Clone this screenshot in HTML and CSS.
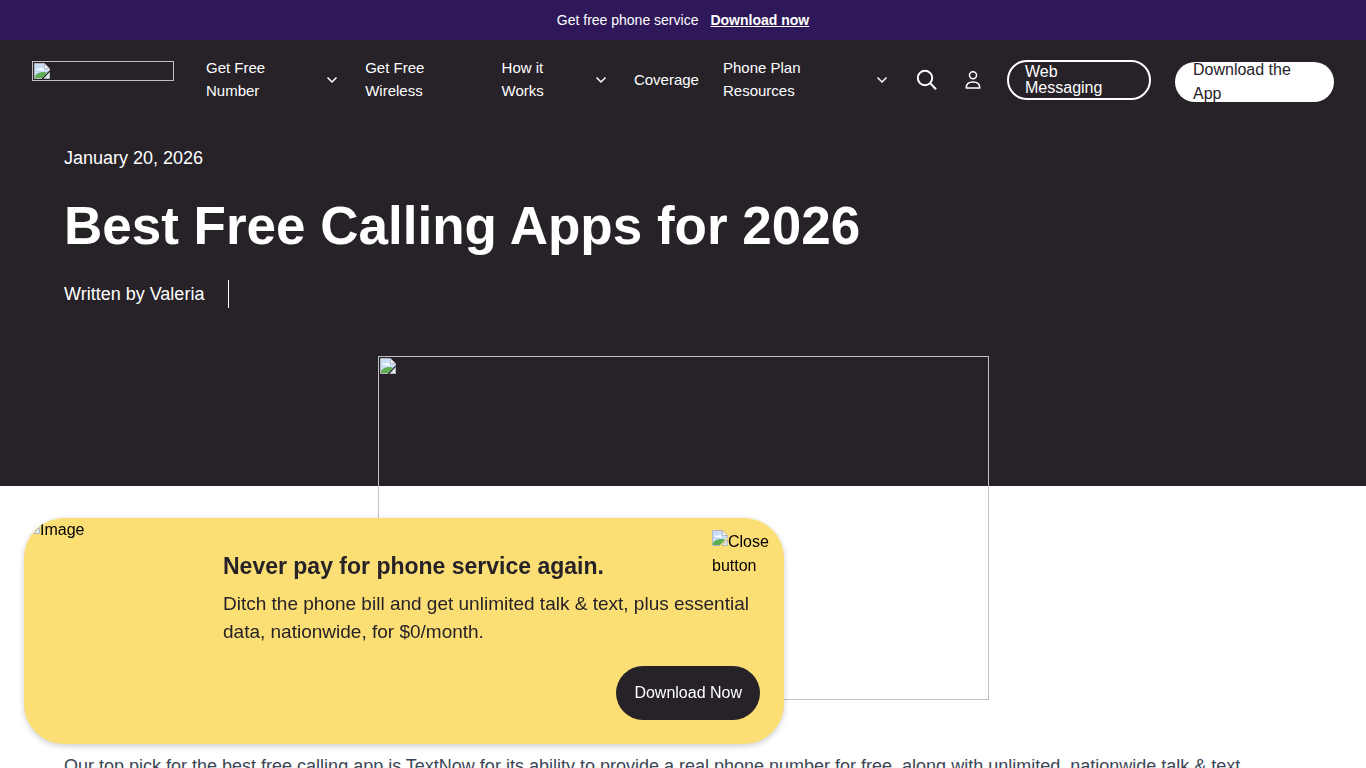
FILE: index.html
```html
<!DOCTYPE html>
<html lang="en">
<head>
    <meta charset="UTF-8">
    <meta name="viewport" content="width=device-width, initial-scale=1.0">
    <title>Best Free Calling Apps for 2026</title>
    <link rel="stylesheet" href="styles.css">
</head>
<body>
<svg class="sprite" aria-hidden="true">
    <symbol id="broken" viewBox="0 0 16 16">
        <path d="M1 1h10v5h4v2l-7 7H1z" fill="#c9dcf8"/>
        <path d="M2.500 7c0-2 2-2.500 3-1C7 4 10 5 10 7.500z" fill="#fff"/>
        <path d="M1 15v-2c2-3 5-4 8-4 2 0 3 .3 4 1l-5 5z" fill="#5fae52"/>
        <path d="M10.500 1v4.500H15z" fill="#fff"/>
        <path d="M.5 15.500V.5h10l5 5V8M10.500.5v5h5M.5 15.500H8" fill="none" stroke="#b4b8be"/>
        <path d="M15.500 9.500v6H10z" fill="#e4ebf3" stroke="#b4b8be"/>
    </symbol>
    <symbol id="chevron" viewBox="0 0 20 20">
        <path d="M6.500 8.500l4.500 4.500 4.500-4.500" fill="none" stroke="currentColor" stroke-width="1.500"/>
    </symbol>
</svg>

<div class="promo-bar">
    <span>Get free phone service</span>
    <a href="#">Download now</a>
</div>

<header class="site-header">
    <a href="#" class="logo" aria-label="Home"><svg class="broken-icon"><use href="#broken"/></svg></a>
    <nav class="main-nav">
        <a href="#">Get Free<br>Number <svg class="chevron"><use href="#chevron"/></svg></a>
        <a href="#">Get Free<br>Wireless</a>
        <a href="#">How it<br>Works <svg class="chevron"><use href="#chevron"/></svg></a>
        <a href="#">Coverage</a>
        <a href="#">Phone Plan<br>Resources <svg class="chevron"><use href="#chevron"/></svg></a>
    </nav>
    <div class="header-tools">
        <button class="icon-button" aria-label="Search">
            <svg width="22" height="22" viewBox="0 0 22 22" fill="none" stroke="currentColor" stroke-width="2">
                <circle cx="10" cy="9" r="7.200"/>
                <path d="M15 14l6 6.300"/>
            </svg>
        </button>
        <a href="#" class="icon-button" aria-label="Account">
            <svg width="22" height="22" viewBox="0 0 22 22" fill="none" stroke="currentColor" stroke-width="1.500">
                <circle cx="12" cy="6.300" r="3.500"/>
                <path d="M5.200 19c0-3.500 2.500-6 6.800-6s6.800 2.500 6.800 6z" stroke-linejoin="round"/>
            </svg>
        </a>
    </div>
    <div class="header-actions">
        <a href="#" class="pill pill-outline">Web Messaging</a>
        <a href="#" class="pill pill-solid">Download the App</a>
    </div>
</header>

<main>
    <section class="hero">
        <p class="hero-date">January 20, 2026</p>
        <h1>Best Free Calling Apps for 2026</h1>
        <p class="hero-author"><span>Written by Valeria</span></p>
    </section>
    <div class="cover"><svg class="broken-icon"><use href="#broken"/></svg></div>
    <article class="post">
        <p>Our top pick for the best free calling app is TextNow for its ability to provide a real phone number for free, along with unlimited, nationwide talk &amp; text.</p>
    </article>
</main>

<aside class="popup">
    <div class="popup-image"><svg class="broken-icon"><use href="#broken"/></svg>Image</div>
    <div class="popup-body">
        <h2>Never pay for phone service again.</h2>
        <p>Ditch the phone bill and get unlimited talk &amp; text, plus essential data, nationwide, for $0/month.</p>
        <a href="#" class="popup-cta">Download Now</a>
    </div>
    <button class="popup-close"><svg class="broken-icon"><use href="#broken"/></svg>Close button</button>
</aside>
</body>
</html>
```

FILE: styles.css
```css
* {
    margin: 0;
    padding: 0;
    box-sizing: border-box;
}

html {
    scrollbar-width: none;
}

body {
    font-family: "Liberation Sans", Arial, sans-serif;
    font-size: 16px;
    line-height: 24px;
    color: #000;
    background: #fff;
}

a {
    color: inherit;
    text-decoration: none;
}

button {
    font: inherit;
    color: inherit;
    background: none;
    border: none;
    cursor: pointer;
}

.sprite {
    display: none;
}

.broken-icon {
    width: 16px;
    height: 16px;
    vertical-align: 1px;
}

/* promo bar */
.promo-bar {
    display: flex;
    justify-content: center;
    align-items: center;
    gap: 12px;
    height: 40px;
    font-size: 14px;
    color: #fff;
    background: #2e1859;
}

.promo-bar a {
    font-weight: 700;
    text-decoration: underline;
}

/* header */
.site-header {
    display: flex;
    align-items: center;
    height: 80px;
    padding: 0 32px;
    color: #fff;
    background: #262228;
}

.logo {
    flex: none;
    display: flex;
    width: 142px;
    height: 20px;
    padding: 1px;
    margin: 0 32px 18px 0;
    border: 1px solid #c0c0c0;
}

.main-nav {
    flex: 1;
    display: grid;
    grid-template-columns: 136fr 113fr 109fr 64fr 169fr;
    align-items: center;
    gap: 24px;
    margin-bottom: 2px;
    font-size: 15px;
    line-height: 23px;
}

.main-nav a {
    position: relative;
}

.chevron {
    position: absolute;
    top: calc(50% - 10px);
    right: 0;
    width: 20px;
    height: 20px;
}

.header-tools {
    display: flex;
    gap: 24px;
    margin: 0 24px;
}

.icon-button {
    display: flex;
}

.header-actions {
    display: flex;
    align-items: center;
    gap: 24px;
}

.pill {
    display: flex;
    align-items: center;
    height: 40px;
    border-radius: 20px;
}

.pill-outline {
    width: 144px;
    padding: 0 32px 0 16px;
    line-height: 16px;
    border: 2px solid #fff;
}

.pill-solid {
    width: 159px;
    padding: 0 18px;
    margin-top: 4px;
    color: #262228;
    background: #fff;
}

/* hero */
.hero {
    padding: 24px 64px 178px;
    font-size: 18px;
    line-height: 28px;
    color: #fff;
    background: #262228;
}

.hero h1 {
    margin: 16px 0;
    font-size: 53px;
    line-height: 76px;
}

.hero-author span {
    display: inline-block;
    padding-right: 24px;
    border-right: 1px solid #fff;
}

.cover {
    position: relative;
    display: flex;
    width: 611px;
    max-width: 90%;
    height: 344px;
    margin: -130px auto 0;
    padding: 1px;
    border: 1px solid #c0c0c0;
}

.post {
    padding: 50px 64px;
    font-size: 18px;
    line-height: 32px;
    color: #3b4656;
}

/* download popup */
.popup {
    position: fixed;
    left: 24px;
    bottom: 24px;
    display: flex;
    width: 760px;
    max-width: calc(100% - 48px);
    border-radius: 40px;
    overflow: hidden;
    background: #fbde74;
    box-shadow: 0 2px 6px rgba(0, 0, 0, 0.2);
}

.popup-image {
    flex: none;
    width: 175px;
}

.popup-body {
    flex: 1;
    display: flex;
    flex-direction: column;
    padding: 32px 24px 24px;
    color: #262228;
}

.popup h2 {
    margin-bottom: 8px;
    font-size: 23px;
    line-height: 32px;
}

.popup p {
    margin-bottom: 20px;
    font-size: 19px;
    line-height: 28px;
}

.popup-cta {
    align-self: flex-end;
    padding: 15px 18px;
    border-radius: 27px;
    color: #fff;
    background: #262228;
}

.popup-close {
    position: absolute;
    top: 12px;
    right: 12px;
    width: 60px;
    text-align: left;
}
```
